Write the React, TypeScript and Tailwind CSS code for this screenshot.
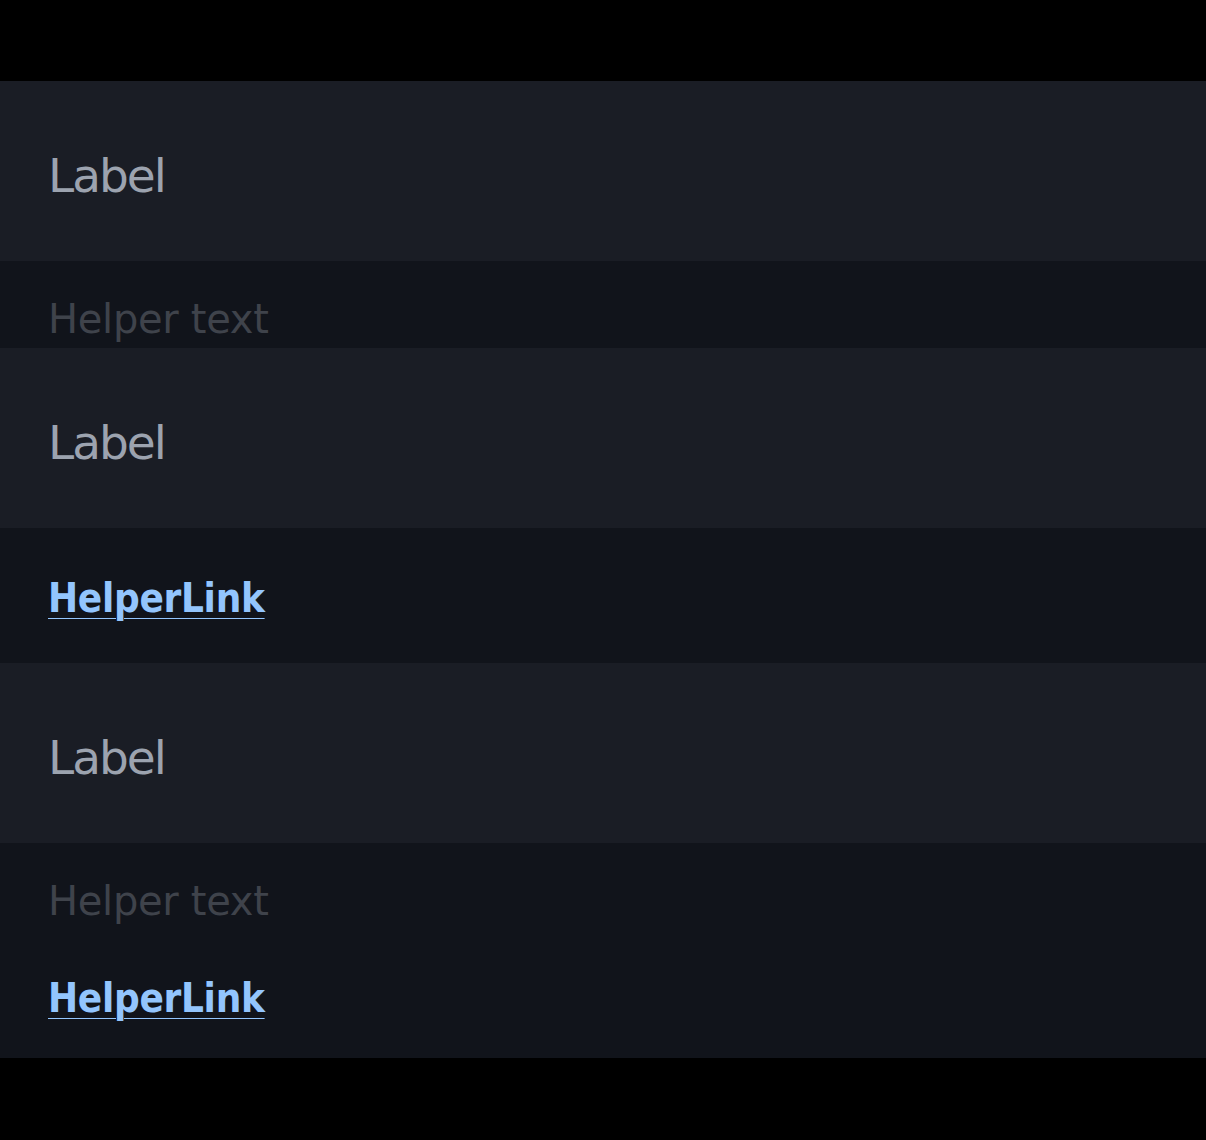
import React from 'react';

const font = { fontFamily: '"Comic Sans MS", "DejaVu Sans", sans-serif' };

const Label: React.FC = () => (
  <div className="h-[180px] bg-[#1a1d25] pl-12 pt-[71px]">
    <span className="block text-[47px] leading-none text-[#9ca3af] tracking-[-2px]">Label</span>
  </div>
);

const HelperText: React.FC = () => (
  <span className="block text-[40px] leading-none text-[#3f434b] tracking-[-0.3px]">Helper text</span>
);

const HelperLink: React.FC<{ className?: string }> = ({ className = '' }) => (
  <a
    href="#"
    className={`inline-block text-[40px] leading-none font-bold text-[#93c5fd] tracking-[-0.3px] underline decoration-1 underline-offset-[6px] ${className}`}
    style={{ fontFamily: '"Comic Sans MS", "DejaVu Sans Condensed", sans-serif' }}
  >
    HelperLink
  </a>
);

export default function App() {
  return (
    <div className="min-h-screen bg-black pt-[81px]" style={font}>
      {/* field with helper text */}
      <div>
        <Label />
        <div className="h-[87px] overflow-hidden bg-[#11141b] pl-12 pt-[38px]">
          <HelperText />
        </div>
      </div>

      {/* field with helper link */}
      <div>
        <Label />
        <div className="h-[135px] bg-[#11141b] pl-12 pt-[50px]">
          <HelperLink />
        </div>
      </div>

      {/* field with both */}
      <div>
        <Label />
        <div className="h-[215px] bg-[#11141b] pl-12 pt-[38px]">
          <HelperText />
          <HelperLink className="mt-[57px]" />
        </div>
      </div>
    </div>
  );
}
